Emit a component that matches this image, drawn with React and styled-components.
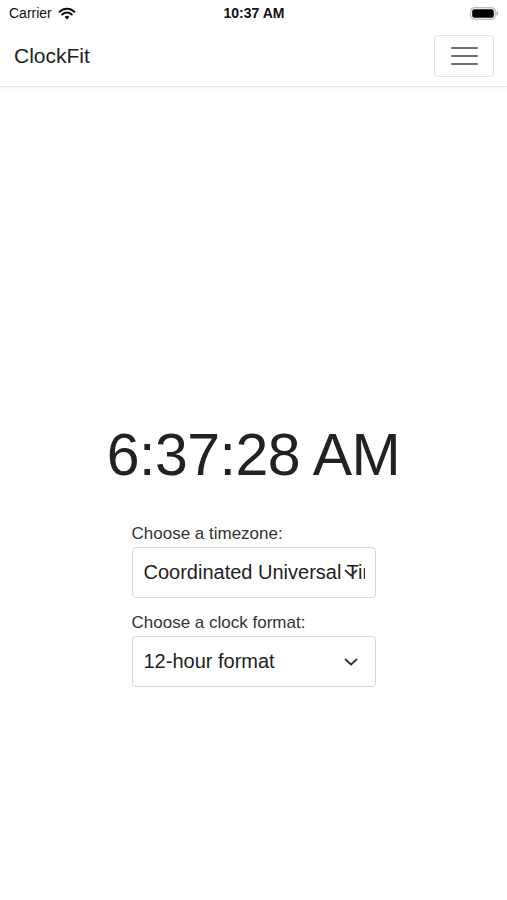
import React from "react";
import styled, { createGlobalStyle } from "styled-components";

const Global = createGlobalStyle`
  html, body { margin: 0; padding: 0; background: #fff; }
  body { font-family: "Liberation Sans", Arial, sans-serif; color: #212529; }
`;

const Page = styled.div`
  width: 507px;
  min-height: 900px;
  display: flex;
  flex-direction: column;
  background: #fff;
`;

const StatusBar = styled.div`
  height: 26px;
  display: grid;
  grid-template-columns: 1fr auto 1fr;
  align-items: center;
  padding: 0 8px 0 9px;
  font-size: 14px;
  color: #111;
`;

const StatusLeft = styled.div`
  display: flex;
  align-items: center;
  gap: 6px;
`;

const StatusTime = styled.div`
  font-weight: 700;
  font-size: 14px;
`;

const StatusRight = styled.div`
  display: flex;
  justify-content: flex-end;
  align-items: center;
`;

const NavBar = styled.header`
  height: 60px;
  display: flex;
  align-items: center;
  justify-content: space-between;
  padding: 0 13px 0 14px;
  border-bottom: 1px solid #e2e2e2;
  box-shadow: 0 2px 4px rgba(0, 0, 0, 0.04);
`;

const Brand = styled.div`
  font-size: 21px;
  color: #222;
`;

const Toggler = styled.button`
  width: 60px;
  height: 42px;
  border: 1px solid #e3e3e3;
  border-radius: 4px;
  background: #fff;
  display: flex;
  flex-direction: column;
  align-items: center;
  justify-content: center;
  gap: 6px;
  padding: 0;
`;

const TogglerLine = styled.span`
  display: block;
  width: 27px;
  height: 2px;
  background: #6e6e6e;
  border-radius: 1px;
`;

const Main = styled.main`
  display: flex;
  flex-direction: column;
  align-items: center;
  padding-top: 333px;
`;

const Clock = styled.div`
  font-size: 59px;
  line-height: 70px;
  letter-spacing: -0.5px;
  color: #222;
  margin-bottom: 34px;
`;

const Form = styled.div`
  width: 244px;
  display: flex;
  flex-direction: column;
  gap: 15px;
`;

const Field = styled.div`
  display: flex;
  flex-direction: column;
`;

const Label = styled.label`
  font-size: 17px;
  line-height: 20px;
  color: #333;
  margin-bottom: 3px;
`;

const SelectBox = styled.div`
  position: relative;
  height: 51px;
  box-sizing: border-box;
  border: 1px solid #d8d8d8;
  border-radius: 4px;
  padding: 0 10px 0 11px;
  display: flex;
  align-items: center;
  background: #fff;
`;

const SelectValue = styled.span`
  font-size: 20px;
  color: #222;
  white-space: nowrap;
  overflow: hidden;
  flex: 1;
`;

const Chevron = styled.svg`
  position: absolute;
  right: 17px;
  top: 50%;
  transform: translateY(-50%);
  width: 14px;
  height: 8px;
`;

function Select({ value }) {
  return (
    <SelectBox>
      <SelectValue>{value}</SelectValue>
      <Chevron viewBox="0 0 14 8">
        <path d="M1.5 1.5 L7 6.5 L12.5 1.5" fill="none" stroke="#333" strokeWidth="1.8" strokeLinecap="round" strokeLinejoin="round" />
      </Chevron>
    </SelectBox>
  );
}

export default function App() {
  return (
    <Page>
      <Global />
      <StatusBar>
        <StatusLeft>
          <span>Carrier</span>
          <svg width="18" height="13" viewBox="0 0 18 13">
            <path d="M9 12.5 L6.6 9.9 A3.4 3.4 0 0 1 11.4 9.9 Z" fill="#111" />
            <path d="M4.2 7.5 A6.8 6.8 0 0 1 13.8 7.5" fill="none" stroke="#111" strokeWidth="2" strokeLinecap="round" />
            <path d="M1.6 4.8 A10.5 10.5 0 0 1 16.4 4.8" fill="none" stroke="#111" strokeWidth="2" strokeLinecap="round" />
          </svg>
        </StatusLeft>
        <StatusTime>10:37 AM</StatusTime>
        <StatusRight>
          <svg width="29" height="13" viewBox="0 0 29 13">
            <rect x="0.75" y="0.75" width="24.5" height="11.5" rx="3.2" fill="none" stroke="#aaa" strokeWidth="1" />
            <rect x="2.2" y="2.2" width="21.6" height="8.6" rx="2" fill="#000" />
            <path d="M26.5 4.3 Q28.2 4.5 28.2 6.5 Q28.2 8.5 26.5 8.7 Z" fill="#aaa" />
          </svg>
        </StatusRight>
      </StatusBar>
      <NavBar>
        <Brand>ClockFit</Brand>
        <Toggler aria-label="menu">
          <TogglerLine />
          <TogglerLine />
          <TogglerLine />
        </Toggler>
      </NavBar>
      <Main>
        <Clock>6:37:28 AM</Clock>
        <Form>
          <Field>
            <Label>Choose a timezone:</Label>
            <Select value="Coordinated Universal Time" />
          </Field>
          <Field>
            <Label>Choose a clock format:</Label>
            <Select value="12-hour format" />
          </Field>
        </Form>
      </Main>
    </Page>
  );
}
